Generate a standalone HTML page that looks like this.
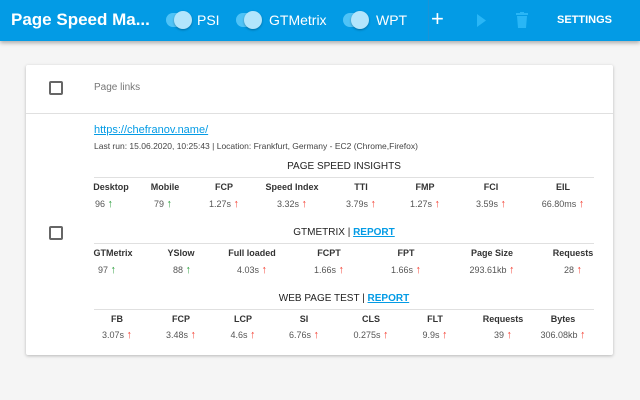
<!DOCTYPE html><html><head><style>
*{margin:0;padding:0;box-sizing:border-box}
body{width:640px;height:400px;background:#f5f5f5;font-family:"Liberation Sans",sans-serif;position:relative;overflow:hidden;color:#222}
.bar{position:absolute;left:0;top:0;width:640px;height:41px;background:#039be5;box-shadow:0 2px 4px rgba(0,0,0,.3);color:#fff}
.a{position:absolute;white-space:nowrap}
.sw{position:absolute;top:13px;width:22px;height:14px;border-radius:7px;background:#4fc3f7}
.sw i{position:absolute;right:-4px;top:-2px;width:18px;height:18px;border-radius:50%;background:#b3e5fc;box-shadow:0 1px 2px rgba(0,0,0,.3)}
.card{position:absolute;left:26px;top:65px;width:587px;height:290px;background:#fff;box-shadow:0 1px 3px rgba(0,0,0,.25);border-radius:2px}
.cb{position:absolute;width:14px;height:14px;border:2px solid #666;border-radius:2px}
.c{position:absolute;transform:translateX(-50%);white-space:nowrap;font-size:9px}
.h{font-weight:bold;color:#333}
.v{color:#555}
.r,.g{font-size:11px;font-weight:bold;line-height:9px}
.r{color:#f44336}.g{color:#2e9e3e}
.ln{position:absolute;left:94px;width:500px;height:1px;background:#e0e0e0}
.t{position:absolute;left:344px;transform:translateX(-50%);font-size:10px;color:#222;white-space:nowrap}
.t a{color:#039be5;font-weight:bold;text-decoration:underline}
</style></head><body>
<div class="bar">
<div class="a" style="left:11px;top:10px;font-size:17px;font-weight:bold">Page Speed Ma...</div>
<div class="sw" style="left:166px"><i></i></div><div class="a" style="left:197px;top:12px;font-size:14px">PSI</div>
<div class="sw" style="left:236px"><i></i></div><div class="a" style="left:269px;top:12px;font-size:14px">GTMetrix</div>
<div class="sw" style="left:343px"><i></i></div><div class="a" style="left:376px;top:12px;font-size:14px">WPT</div>
<div class="a" style="left:428px;top:0;width:1px;height:41px;background:#1a93d6"></div>
<div class="a" style="left:431px;top:6px;font-size:22px">+</div>
<svg class="a" style="left:475px;top:14px" width="12" height="13"><path d="M2 0L11 6.5L2 13Z" fill="#29b6f6"/></svg>
<svg class="a" style="left:516px;top:12px" width="12" height="16"><rect x="0" y="1" width="12" height="2" fill="#29b6f6"/><rect x="4" y="0" width="4" height="2" fill="#29b6f6"/><path d="M1 4h10l-1 12H2Z" fill="#29b6f6"/></svg>
<div class="a" style="left:557px;top:14px;font-size:11px;font-weight:bold">SETTINGS</div>
</div>
<div class="card">
<div class="cb" style="left:23px;top:16px"></div>
<div class="a" style="left:68px;top:17px;font-size:10px;color:#777">Page links</div>
<div class="a" style="left:0;top:48px;width:587px;height:1px;background:#e0e0e0"></div>
<div class="cb" style="left:23px;top:161px"></div>
</div>
<div class="a" style="left:94px;top:124px;font-size:11px;color:#039be5;text-decoration:underline">https://chefranov.name/</div>
<div class="a" style="left:94px;top:141px;font-size:8.5px;color:#444">Last run: 15.06.2020, 10:25:43 | Location: Frankfurt, Germany - EC2 (Chrome,Firefox)</div>

<div class="t" style="top:161px">PAGE SPEED INSIGHTS</div><div class="ln" style="top:177px"></div>
<div class="c h" style="left:111px;top:182px">Desktop</div><div class="c v" style="left:104px;top:199px">96 <span class="g">↑</span></div>
<div class="c h" style="left:165px;top:182px">Mobile</div><div class="c v" style="left:163px;top:199px">79 <span class="g">↑</span></div>
<div class="c h" style="left:224px;top:182px">FCP</div><div class="c v" style="left:224px;top:199px">1.27s <span class="r">↑</span></div>
<div class="c h" style="left:292px;top:182px">Speed Index</div><div class="c v" style="left:292px;top:199px">3.32s <span class="r">↑</span></div>
<div class="c h" style="left:361px;top:182px">TTI</div><div class="c v" style="left:361px;top:199px">3.79s <span class="r">↑</span></div>
<div class="c h" style="left:425px;top:182px">FMP</div><div class="c v" style="left:425px;top:199px">1.27s <span class="r">↑</span></div>
<div class="c h" style="left:491px;top:182px">FCI</div><div class="c v" style="left:491px;top:199px">3.59s <span class="r">↑</span></div>
<div class="c h" style="left:563px;top:182px">EIL</div><div class="c v" style="left:563px;top:199px">66.80ms <span class="r">↑</span></div>

<div class="t" style="top:227px">GTMETRIX | <a>REPORT</a></div><div class="ln" style="top:243px"></div>
<div class="c h" style="left:113px;top:248px">GTMetrix</div><div class="c v" style="left:107px;top:265px">97 <span class="g">↑</span></div>
<div class="c h" style="left:181px;top:248px">YSlow</div><div class="c v" style="left:182px;top:265px">88 <span class="g">↑</span></div>
<div class="c h" style="left:252px;top:248px">Full loaded</div><div class="c v" style="left:252px;top:265px">4.03s <span class="r">↑</span></div>
<div class="c h" style="left:329px;top:248px">FCPT</div><div class="c v" style="left:329px;top:265px">1.66s <span class="r">↑</span></div>
<div class="c h" style="left:406px;top:248px">FPT</div><div class="c v" style="left:406px;top:265px">1.66s <span class="r">↑</span></div>
<div class="c h" style="left:492px;top:248px">Page Size</div><div class="c v" style="left:492px;top:265px">293.61kb <span class="r">↑</span></div>
<div class="c h" style="left:573px;top:248px">Requests</div><div class="c v" style="left:573px;top:265px">28 <span class="r">↑</span></div>

<div class="t" style="top:293px">WEB PAGE TEST | <a>REPORT</a></div><div class="ln" style="top:309px"></div>
<div class="c h" style="left:117px;top:314px">FB</div><div class="c v" style="left:117px;top:330px">3.07s <span class="r">↑</span></div>
<div class="c h" style="left:181px;top:314px">FCP</div><div class="c v" style="left:181px;top:330px">3.48s <span class="r">↑</span></div>
<div class="c h" style="left:243px;top:314px">LCP</div><div class="c v" style="left:243px;top:330px">4.6s <span class="r">↑</span></div>
<div class="c h" style="left:304px;top:314px">SI</div><div class="c v" style="left:304px;top:330px">6.76s <span class="r">↑</span></div>
<div class="c h" style="left:371px;top:314px">CLS</div><div class="c v" style="left:371px;top:330px">0.275s <span class="r">↑</span></div>
<div class="c h" style="left:435px;top:314px">FLT</div><div class="c v" style="left:435px;top:330px">9.9s <span class="r">↑</span></div>
<div class="c h" style="left:503px;top:314px">Requests</div><div class="c v" style="left:503px;top:330px">39 <span class="r">↑</span></div>
<div class="c h" style="left:563px;top:314px">Bytes</div><div class="c v" style="left:563px;top:330px">306.08kb <span class="r">↑</span></div>
</body></html>
